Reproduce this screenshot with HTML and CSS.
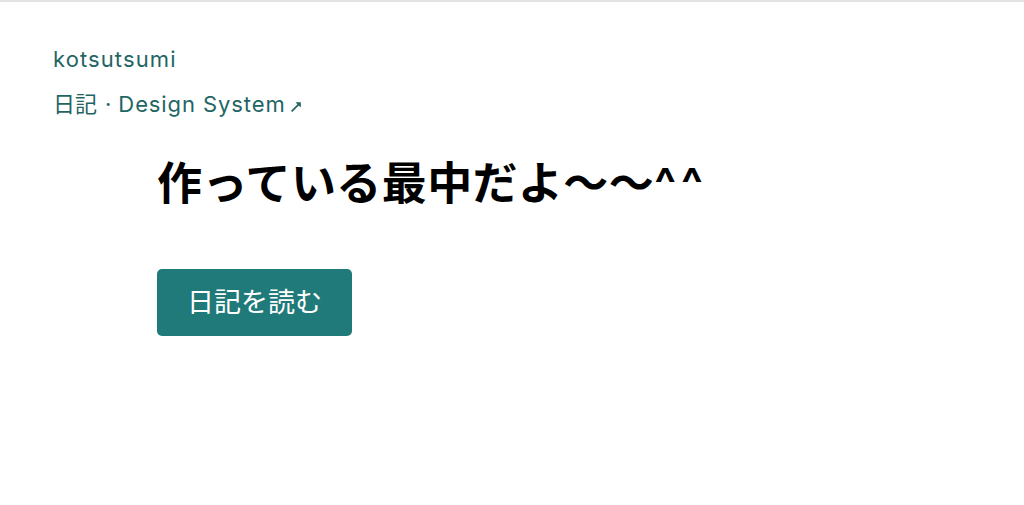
FILE: index.html
```html
<!DOCTYPE html>
<html lang="ja">
<head>
<meta charset="utf-8">
<link rel="stylesheet" href="styles.css">
</head>
<body>
<div class="topline"></div>
<header class="site">
  <a class="brand" href="#">kotsutsumi</a>
  <nav class="nav">
    <a href="#">日記</a><span class="sep">·</span><a href="#">Design System<svg class="ext" width="13" height="13" viewBox="0 0 12 12" aria-hidden="true"><path d="M1.5 10.5 L8.5 3.5" stroke="currentColor" stroke-width="1.6" fill="none"/><path d="M5 2 L10 2 L10 7 Z" fill="currentColor"/></svg></a>
  </nav>
</header>
<main class="main">
  <h1 class="title">作っている最中だよ〜〜<span class="caret">^^</span></h1>
  <a class="btn" href="#">日記を読む</a>
</main>
</body>
</html>
```
FILE: styles.css
```css
html, body {
  margin: 0;
  padding: 0;
  background: #fff;
}
body {
  font-family: "Inter", "Noto Sans CJK JP", sans-serif;
  color: #000;
}
.topline {
  height: 2px;
  background: #e3e3e3;
}
.site {
  padding: 41px 0 0 53px;
  display: flex;
  flex-direction: column;
  gap: 13px;
}
.brand, .nav a {
  color: #1f6564;
  text-decoration: none;
  font-size: 22px;
  line-height: 32px;
  letter-spacing: 1.1px;
}
.nav {
  font-size: 22px;
  line-height: 32px;
  color: #1f6564;
}
.nav a:first-child {
  letter-spacing: 0;
}
.sep {
  margin: 0 7px 0 8px;
}
.nav a:last-child {
  letter-spacing: 0.9px;
}
.ext {
  margin-left: 4px;
  vertical-align: -1px;
}
.main {
  padding: 32px 0 0 157px;
}
.title {
  margin: 0;
  font-size: 45px;
  line-height: 64px;
  font-weight: 700;
  letter-spacing: 0.4px;
}
.caret {
  letter-spacing: 5px;
}
.btn {
  display: inline-block;
  margin-top: 53px;
  background: #217a7a;
  color: #fff;
  text-decoration: none;
  font-size: 27px;
  line-height: 67px;
  height: 67px;
  width: 195px;
  text-align: center;
  border-radius: 5px;
}
```
